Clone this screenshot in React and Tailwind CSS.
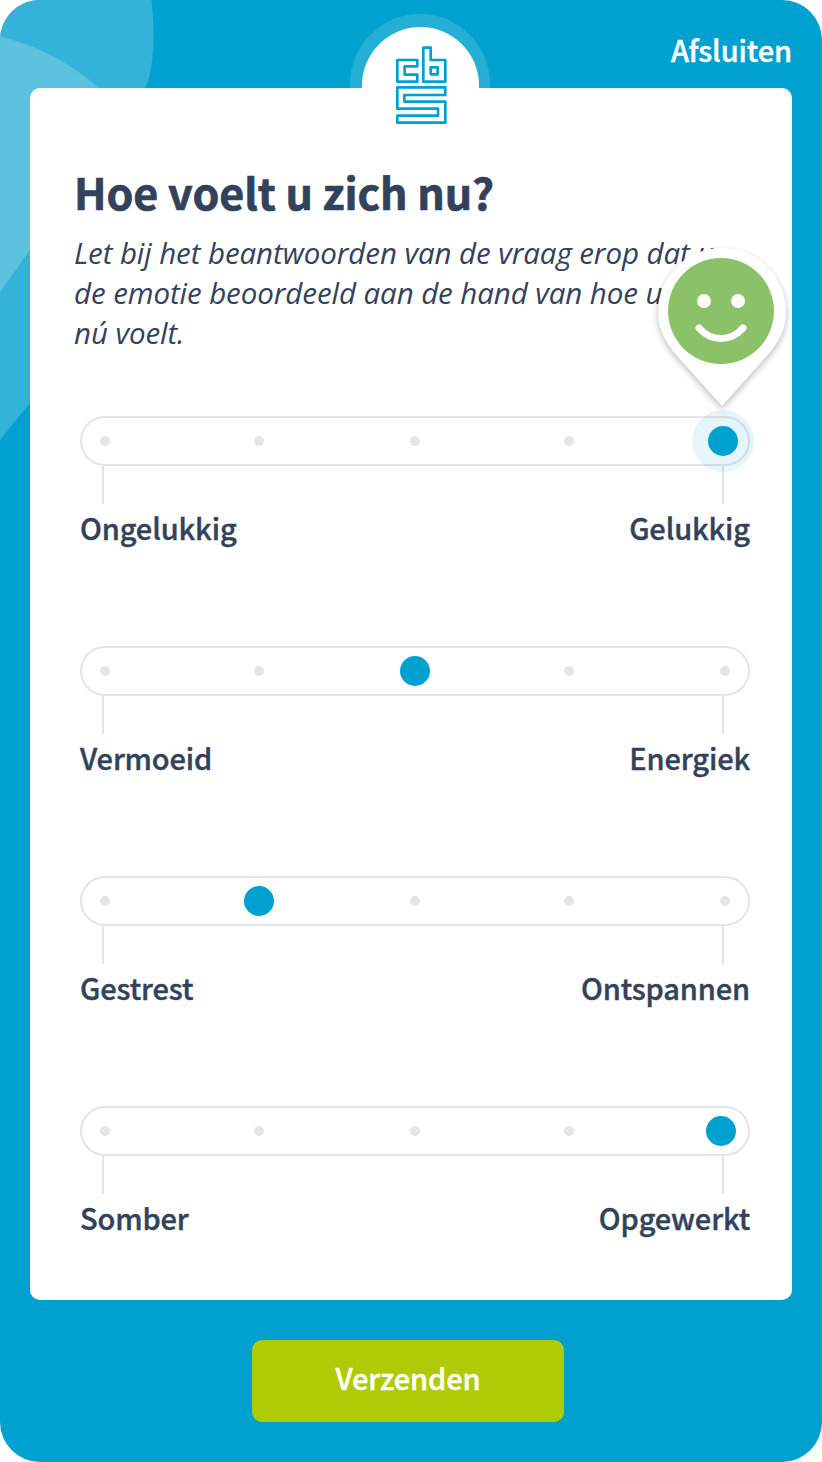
const questions = [
  { low: "Ongelukkig", high: "Gelukkig", thumb: "left-[626px]", active: true },
  { low: "Vermoeid", high: "Energiek", thumb: "left-[318px]" },
  { low: "Gestrest", high: "Ontspannen", thumb: "left-[162px]" },
  { low: "Somber", high: "Opgewerkt", thumb: "left-[624px]" },
];

const stepMargins = ["ml-0", "ml-[144px]", "ml-[146px]", "ml-[144px]", "ml-[146px]"];

function Backdrop() {
  return (
    <svg className="absolute left-0 top-0" width="160" height="460" viewBox="0 0 160 460">
      <path d="M0 0H151.500Q157 50 148 82Q144 92 130 110V285L30 403L0 440Z" fill="#33b3d9" />
      <path d="M0 36.500Q56 50 98.500 88L110 140L30 250L0 292Z" fill="#5cc2e0" />
    </svg>
  );
}

function Logo() {
  return (
    <svg
      className="absolute left-[33px] top-[18px]"
      width="53"
      height="81"
      viewBox="165 135 159 243"
      fill="none"
      stroke="#00a1cf"
      strokeWidth="8"
      strokeLinejoin="round"
    >
      <path d="M172 180H232V199H194V224H232V245H172Z" />
      <path d="M250 143H272V180H316V245H250Z" />
      <path d="M272 202H293V223H272Z" />
      <path d="M172 262H316V285H193V305H316V368H172V347H294V326H172Z" />
    </svg>
  );
}

function MoodPin() {
  return (
    <svg
      className="absolute -top-[178px] left-[566px] z-10 drop-shadow-[0_3px_3px_rgba(0,0,0,0.26)]"
      width="150"
      height="176"
      viewBox="646 238 150 176"
    >
      <path d="M722 406L678 357C664 341 658 328 658 312A64 64 0 0 1 786 312C786 328 780 341 766 357Z" fill="#fff" />
      <circle cx="721" cy="311" r="53" fill="#8bc168" />
      <circle cx="704" cy="301" r="7" fill="#fff" />
      <circle cx="738" cy="301" r="7" fill="#fff" />
      <path d="M699 328Q708 338.500 721 338.500T743 328" fill="none" stroke="#fff" strokeWidth="7" strokeLinecap="round" />
    </svg>
  );
}

function Question({ low, high, thumb, active }) {
  return (
    <section className="relative h-[230px] w-[670px]">
      <div className="relative flex h-[50px] items-center rounded-full border-2 border-[#e5e5e5] pl-[18px]">
        {stepMargins.map((margin, i) => (
          <span key={i} className={`size-[10px] shrink-0 rounded-full bg-[#e5e5e5] ${margin}`} />
        ))}
        {active && (
          <span className="absolute -top-[8px] left-[610px] size-[62px] rounded-full bg-[#00a1cf]/10" />
        )}
        <span className={`absolute top-[8px] size-[30px] rounded-full bg-[#00a1cf] ${thumb}`} />
      </div>
      {active && <MoodPin />}
      <div className="mx-[22px] flex h-[38px] justify-between">
        <span className="w-[2px] bg-[#e5e5e5]" />
        <span className="mr-[4px] w-[2px] bg-[#e5e5e5]" />
      </div>
      <div className="flex justify-between text-[29px] font-medium leading-[47px] tracking-[-0.12px] [-webkit-text-stroke:0.4px_currentColor]">
        <span>{low}</span>
        <span>{high}</span>
      </div>
    </section>
  );
}

export default function App() {
  return (
    <div className="h-[1462px] w-[822px] bg-white font-['Noto_Sans_CJK_SC',sans-serif] text-[#33425b]">
      <div className="relative flex h-full flex-col items-center overflow-hidden rounded-[40px] bg-[#00a1cf]">
        <Backdrop />
        <div className="absolute left-[350px] top-[14px] size-[140px] rounded-full bg-[#26afd6]" />
        <div className="absolute left-[362px] top-[27px] z-10 size-[117px] rounded-full bg-white">
          <Logo />
        </div>
        <header className="flex h-[88px] w-full shrink-0 justify-end pr-[30px] pt-[28px]">
          <button className="h-[42px] text-[29px] font-medium leading-[42px] tracking-[-0.1px] text-white [-webkit-text-stroke:0.4px_currentColor]">
            Afsluiten
          </button>
        </header>
        <main className="relative h-[1212px] w-[762px] shrink-0 rounded-[10px] bg-white pl-[50px] pt-[73px]">
          <h1 className="-ml-[6px] whitespace-nowrap text-[43px] font-bold leading-[61px] tracking-[-0.05px] [-webkit-text-stroke:0.7px_currentColor]">
            Hoe voelt u zich nu?
          </h1>
          <p className="-ml-[6px] mt-[11px] h-[183px] whitespace-nowrap font-['Open_Sans',sans-serif] text-[29.5px] italic leading-[40px] tracking-[-0.08px]">
            Let bij het beantwoorden van de vraag erop dat u
            <br />
            de emotie beoordeeld aan de hand van hoe u zich
            <br />
            nú voelt.
          </p>
          {questions.map((q) => (
            <Question key={q.low} {...q} />
          ))}
        </main>
        <button className="mr-[6px] mt-[40px] h-[82px] w-[312px] shrink-0 rounded-[10px] bg-[#afcb05] pb-[6px] text-[29px] font-medium tracking-[-0.1px] text-white [-webkit-text-stroke:0.4px_currentColor]">
          Verzenden
        </button>
      </div>
    </div>
  );
}
